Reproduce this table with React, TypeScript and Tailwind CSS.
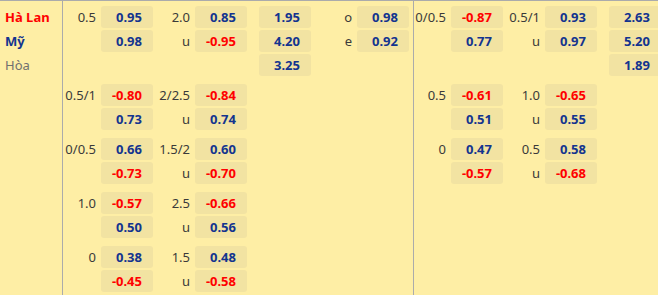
const BLUE = "text-[#13348f]"
const RED = "text-[#ff0000]"

type Cell = { label?: string; value?: string }
type Line = {
  name?: { text: string; cls: string }
  mid: [Cell, Cell, string?, Cell?]
  right: [Cell, Cell, string?]
}

function Odds({ value, w = "w-[52px]" }: { value?: string; w?: string }) {
  if (!value) return <div className={`${w} h-[22px] shrink-0`} />
  const neg = value.startsWith("-")
  return (
    <div
      className={`${w} h-[22px] shrink-0 rounded-[3px] bg-[#f2e3a2] pr-[11px] text-right text-[13px] font-bold leading-[22px] ${neg ? RED : BLUE}`}
    >
      {value}
    </div>
  )
}

function Label({ text, w }: { text?: string; w: string }) {
  return (
    <div className={`${w} h-[22px] shrink-0 pr-[5px] text-right text-[13px] leading-[22px] text-[#3a3a3a]`}>
      {text}
    </div>
  )
}

function Group({ lines, first }: { lines: Line[]; first?: boolean }) {
  const pad = first ? "pt-[5px]" : "pt-[6px]"
  return (
    <div className="flex">
      <div className={`w-[63px] shrink-0 border-r border-[#ababab] pl-[5px] ${pad}`}>
        {lines.map((l, i) => (
          <div key={i} className={`mb-[2px] h-[22px] text-[13px] leading-[22px] ${l.name?.cls ?? ""}`}>
            {l.name?.text}
          </div>
        ))}
      </div>
      <div className={`w-[351px] shrink-0 border-r border-[#ababab] ${pad}`}>
        {lines.map((l, i) => (
          <div key={i} className="mb-[2px] flex h-[22px]">
            <Label text={l.mid[0].label} w="w-[38px]" />
            <Odds value={l.mid[0].value} />
            <Label text={l.mid[1].label} w="w-[42px]" />
            <Odds value={l.mid[1].value} />
            <div className="w-[12px] shrink-0" />
            <Odds value={l.mid[2]} />
            <Label text={l.mid[3]?.label} w="w-[46px]" />
            <Odds value={l.mid[3]?.value} />
          </div>
        ))}
      </div>
      <div className={`flex-1 ${pad}`}>
        {lines.map((l, i) => (
          <div key={i} className="mb-[2px] flex h-[22px]">
            <Label text={l.right[0].label} w="w-[37px]" />
            <Odds value={l.right[0].value} />
            <Label text={l.right[1].label} w="w-[42px]" />
            <Odds value={l.right[1].value} />
            <div className="w-[12px] shrink-0" />
            <Odds value={l.right[2]} />
          </div>
        ))}
      </div>
    </div>
  )
}

const groups: Line[][] = [
  [
    {
      name: { text: "Hà Lan", cls: `font-bold ${RED}` },
      mid: [{ label: "0.5", value: "0.95" }, { label: "2.0", value: "0.85" }, "1.95", { label: "o", value: "0.98" }],
      right: [{ label: "0/0.5", value: "-0.87" }, { label: "0.5/1", value: "0.93" }, "2.63"],
    },
    {
      name: { text: "Mỹ", cls: `font-bold ${BLUE}` },
      mid: [{ value: "0.98" }, { label: "u", value: "-0.95" }, "4.20", { label: "e", value: "0.92" }],
      right: [{ value: "0.77" }, { label: "u", value: "0.97" }, "5.20"],
    },
    {
      name: { text: "Hòa", cls: "text-[#707070]" },
      mid: [{}, {}, "3.25"],
      right: [{}, {}, "1.89"],
    },
  ],
  [
    { mid: [{ label: "0.5/1", value: "-0.80" }, { label: "2/2.5", value: "-0.84" }], right: [{ label: "0.5", value: "-0.61" }, { label: "1.0", value: "-0.65" }] },
    { mid: [{ value: "0.73" }, { label: "u", value: "0.74" }], right: [{ value: "0.51" }, { label: "u", value: "0.55" }] },
  ],
  [
    { mid: [{ label: "0/0.5", value: "0.66" }, { label: "1.5/2", value: "0.60" }], right: [{ label: "0", value: "0.47" }, { label: "0.5", value: "0.58" }] },
    { mid: [{ value: "-0.73" }, { label: "u", value: "-0.70" }], right: [{ value: "-0.57" }, { label: "u", value: "-0.68" }] },
  ],
  [
    { mid: [{ label: "1.0", value: "-0.57" }, { label: "2.5", value: "-0.66" }], right: [{}, {}] },
    { mid: [{ value: "0.50" }, { label: "u", value: "0.56" }], right: [{}, {}] },
  ],
  [
    { mid: [{ label: "0", value: "0.38" }, { label: "1.5", value: "0.48" }], right: [{}, {}] },
    { mid: [{ value: "-0.45" }, { label: "u", value: "-0.58" }], right: [{}, {}] },
  ],
]

export default function App() {
  return (
    <div className="flex h-[295px] w-[658px] flex-col overflow-hidden border-t border-[#ababab] bg-[#feeea5] font-['Noto_Sans',sans-serif]">
      {groups.map((g, i) => (
        <Group key={i} lines={g} first={i === 0} />
      ))}
      <div className="flex flex-1">
        <div className="w-[63px] shrink-0 border-r border-[#ababab]" />
        <div className="w-[351px] shrink-0 border-r border-[#ababab]" />
      </div>
    </div>
  )
}
